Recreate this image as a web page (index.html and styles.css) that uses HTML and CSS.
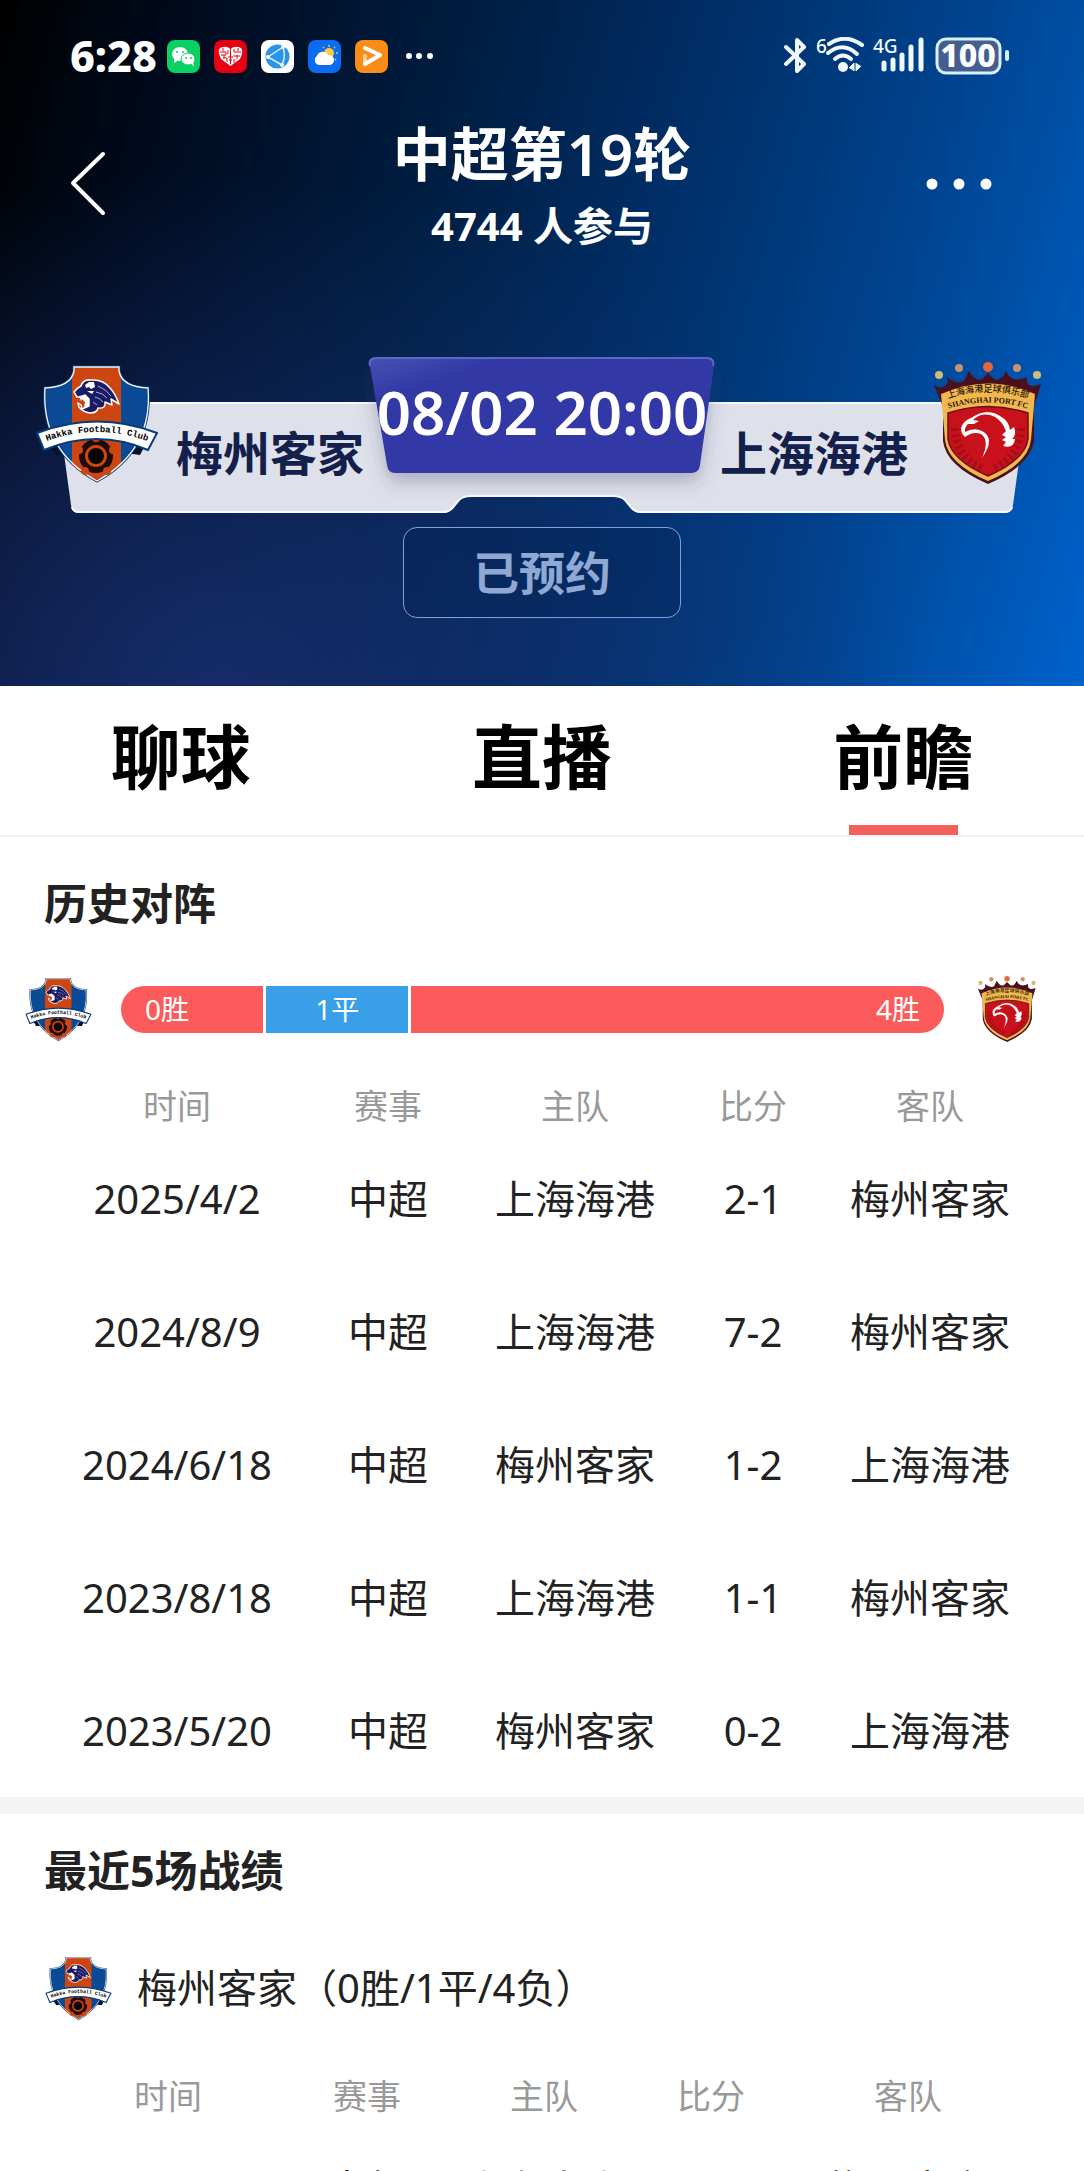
FILE: index.html
```html
<!DOCTYPE html>
<html lang="zh-CN">
<head>
<meta charset="utf-8">
<meta name="viewport" content="width=device-width, initial-scale=1">
<title>中超第19轮</title>
<link rel="stylesheet" href="styles.css">
</head>
<body>
<svg class="sprite" aria-hidden="true">
  <symbol id="crest-meizhou" viewBox="0 0 122 124">
    <path d="M9 76 L20 93 L32 91 L30 78 Z M113 76 L104 93 L90 91 L92 78 Z" fill="#06122c"/>
    <path d="M38 5 H83 V9 Q86 25 112 26 Q117 88 61 119 Q5 88 9 26 Q35 25 38 9 Z" fill="#0b4a94" stroke="#063a7a" stroke-width="3"/>
    <path d="M36 15 L38 5 H83 L85 15 V103 Q76 111 61 118 Q46 111 36 103 Z" fill="#cd4510"/>
    <path d="M38 5 H83 V9 Q86 25 112 26 Q117 88 61 119 Q5 88 9 26 Q35 25 38 9 Z" fill="none" stroke="#e8f2ff" stroke-width="1.4"/>
    <path d="M38 30 Q41 26 45 24 Q47 17 55 18 Q67 17 74 26 Q79 31 83 42 L75 37 L76 43 L69 40 Q70 47 62 46 Q61 51 54 51 Q47 50 43 45 L42 41 L45 43 L46 47 L53 44 L53 37 L49 33 L45 35 L41 35 Z" fill="#1b1b63" stroke="#fff" stroke-width="1.5" stroke-linejoin="round"/>
    <path d="M43 34 L48 33 L53 37 V44 L48 46 L49 40 L46 37 L45 39 Z" fill="#fff"/>
    <path d="M49 23 L53 20 L58 20 L59 25 L55 27 L53 25 L50 26 Z M51 29 L58 29 L56 32 Z" fill="#fff"/>
    <path d="M62 24 Q70 27 75 34 M60 30 Q67 31 71 36 M59 35 Q64 36 67 40 M57 40 L61 43" fill="none" stroke="#a9aed8" stroke-width="1"/>
    <circle cx="60" cy="94" r="17" fill="#1c0b08"/>
    <g fill="#cd4510"><circle cx="60" cy="94" r="11"/><circle cx="60" cy="76" r="4"/><circle cx="77" cy="88" r="4"/><circle cx="71" cy="109" r="4"/><circle cx="49" cy="109" r="4"/><circle cx="43" cy="88" r="4"/></g>
    <circle cx="60" cy="94" r="8" fill="#080505"/>
    <path d="M1 71 Q61 48 121 71 L112 88 Q61 66 8 88 Z" fill="#fff" stroke="#073c79" stroke-width="2"/>
    <path id="ribbon-line" d="M8 80 Q61 60 114 80" fill="none"/>
    <text class="crest-ribbon"><textPath href="#ribbon-line" startOffset="50%">Hakka Football Club</textPath></text>
  </symbol>
  <symbol id="crest-shanghai" viewBox="0 0 122 124">
    <circle cx="13" cy="13" r="4" fill="#cdbd76"/><circle cx="33" cy="6" r="4" fill="#c89272"/><circle cx="62" cy="5" r="5" fill="#e8663a"/><circle cx="91" cy="6" r="4" fill="#c89272"/><circle cx="111" cy="13" r="4" fill="#cdbd76"/>
    <path d="M8 23 Q17 29 22 20 L21 15 Q31 23 38 19 L43 9 Q49 20 56 17 L62 11 L68 17 Q75 20 80 9 Q85 22 101 15 Q99 28 115 22 L108 45 V79 Q104 104 62 122 Q20 104 17 79 V45 Z" fill="#4a101c"/>
    <path d="M15 32 Q62 11 109 32 L105 78 Q102 102 62 119 Q22 102 19 78 Z" fill="#f0b84e"/>
    <path d="M22 51 Q62 38 102 51 V77 Q99 98 62 114 Q25 98 22 77 Z" fill="#c9111c" stroke="#65101b" stroke-width="1.5"/>
    <path d="M29 66 Q29 94 57 107 M95 66 Q95 94 67 107" fill="none" stroke="#a80d18" stroke-width="8" stroke-dasharray="3 3"/>
    <path d="M35 66 Q37 59 45 56 Q62 44 77 56 Q83 60 84 68 L88 65 Q91 73 86 77 L89 77 Q88 87 77 84 L80 80 L76 78 L80 75 L76 73 L80 69 Q76 59 69 55 Q57 49 47 58 L53 59 L48 62 L42 62 Q38 66 39 70 Q48 65 56 69 Q70 76 56 96 Q64 78 55 72 Q47 69 39 75 Q35 72 35 66 Z" fill="#fff"/>
    <path id="port-line" d="M16 39 Q62 20 108 39" fill="none"/>
    <path id="port-line-en" d="M18 48 Q62 33 106 48" fill="none"/>
    <text class="crest-cn"><textPath href="#port-line" startOffset="50%">上海海港足球俱乐部</textPath></text>
    <text class="crest-en"><textPath href="#port-line-en" startOffset="50%">SHANGHAI PORT FC</textPath></text>
  </symbol>
</svg>

<header class="hero">
  <div class="status">
    <div class="status-left">
      <span class="clock">6:28</span>
      <svg class="app" viewBox="0 0 33 33"><rect width="33" height="33" rx="8" fill="#0bd063"/><ellipse cx="13" cy="14" rx="8" ry="7" fill="#fff"/><path d="M7 18 L7 23 L12 20Z" fill="#fff"/><ellipse cx="21" cy="19" rx="7" ry="6" fill="#fff" stroke="#0bd063"/><path d="M24 23 L27 27 L26 21Z" fill="#fff"/><g fill="#0bd063"><circle cx="10" cy="12" r="1"/><circle cx="16" cy="12" r="1"/><circle cx="19" cy="18" r="1"/><circle cx="24" cy="18" r="1"/></g></svg>
      <svg class="app" viewBox="0 0 33 33"><rect width="33" height="33" rx="8" fill="#e60012"/><path d="M16.500 26 L7 19 Q3 11 6 8 Q12 5 16.500 9 Q21 5 27 8 Q30 11 26 19Z" fill="#fff"/><path d="M6 12 H12 V15 H7 M16.500 8 V24 M20 9 V12 H27 M19 16 H26 M9 18 H13 V22 M20 19 V23 M9 8 V11 M24 8 V11 M10 15 V18 M23 15 V19 M14 10 V14 M14 17 H19 M15 20 H18" fill="none" stroke="#e60012" stroke-width="1"/></svg>
      <svg class="app" viewBox="0 0 33 33"><rect width="33" height="33" rx="8" fill="#fff"/><circle cx="16.500" cy="16.500" r="12" fill="#2b93e8"/><path d="M7 17 L22 7 M7 17 L21 25 M22 7 Q25 16 21 25" fill="none" stroke="#d9f0ff" stroke-width="1.500"/><g fill="#fff"><circle cx="7" cy="17" r="2"/><circle cx="22" cy="7" r="2"/><circle cx="21" cy="25" r="2"/></g></svg>
      <svg class="app" viewBox="0 0 33 33"><rect width="33" height="33" rx="8" fill="#0b6cf2"/><circle cx="21" cy="13" r="5" fill="#ffc93b"/><path d="M21 5 V7 M28 13 H30 M15 7 L16 8 M27 7 L26 8 M27 19 L28 20" stroke="#ffc93b" stroke-width="1.500"/><path d="M11 25 A5 5 0 0 1 9 16 A6 6 0 0 1 20 15 A5 5 0 0 1 22 25Z" fill="#fff"/></svg>
      <svg class="app" viewBox="0 0 33 33"><rect width="33" height="33" rx="8" fill="#f98d18"/><path d="M10 16 V23" fill="none" stroke="#ffd19b" stroke-width="4" stroke-linecap="round"/><path d="M10 8 L25 15 L10 24" fill="none" stroke="#fff" stroke-width="4" stroke-linecap="round" stroke-linejoin="round"/></svg>
      <svg class="more-apps" viewBox="0 0 27 8"><g fill="#fff"><circle cx="3" cy="4" r="3"/><circle cx="13" cy="4" r="3"/><circle cx="24" cy="4" r="3"/></g></svg>
    </div>
    <svg class="status-right" viewBox="0 0 226 38" aria-hidden="true">
      <path d="M2 10 L20 27 L13 34 V3 L20 10 L2 27" fill="none" stroke="#f0f8ff" stroke-width="4" stroke-linecap="round" stroke-linejoin="round"/>
      <text class="net" x="32" y="16">6</text>
      <g fill="none" stroke="#f0f8ff" stroke-width="4" stroke-linecap="round"><path d="M45 7 Q61 -4 78 8"/><path d="M44 16 Q59 4 73 17"/><path d="M51 22 Q59 15 67 22"/></g>
      <circle cx="59" cy="30" r="5" fill="#f0f8ff"/><path d="M65 31 L70 26 V34 M72 26 V34 L77 29" fill="#f0f8ff" stroke="#f0f8ff" stroke-width="1"/>
      <text class="net" x="89" y="16">4G</text>
      <path d="M100 26 V32 M109 23 V32 M118 18 V32 M127 10 V32 M137 3 V32" stroke="#f0f8ff" stroke-width="5" stroke-linecap="round"/>
      <rect x="153" y="2" width="63" height="34" rx="9" fill="#435f8e" stroke="#d9f0ff" stroke-width="3"/>
      <text class="charge" x="184" y="30">100</text>
      <path d="M223 15 V22" stroke="#d9f0ff" stroke-width="4" stroke-linecap="round"/>
    </svg>
  </div>

  <div class="topbar">
    <button class="icon-btn" type="button" aria-label="返回"><svg width="37" height="66" viewBox="0 0 37 66"><path d="M34 3 L4 32 L34 62" fill="none" stroke="#fff" stroke-width="4" stroke-linecap="round" stroke-linejoin="round"/></svg></button>
    <div class="headline">
      <h1 class="title">中超第19轮</h1>
      <p class="joined">4744 人参与</p>
    </div>
    <button class="icon-btn icon-btn-more" type="button" aria-label="更多"><svg width="66" height="12" viewBox="0 0 66 12"><g fill="#fff"><circle cx="6" cy="6" r="5.500"/><circle cx="33" cy="6" r="5.500"/><circle cx="60" cy="6" r="5.500"/></g></svg></button>
  </div>

  <div class="match">
    <svg class="banner" viewBox="0 0 1084 180" preserveAspectRatio="none" aria-hidden="true">
      <defs>
        <linearGradient id="kick" x1="0" y1="0" x2="1" y2="1"><stop offset="0" stop-color="#4653b4"/><stop offset=".2" stop-color="#3139a4"/><stop offset="1" stop-color="#3038a6"/></linearGradient>
        <filter id="drop" x="-10%" y="-10%" width="120%" height="140%"><feDropShadow dx="0" dy="9" stdDeviation="9" flood-color="#3a3566" flood-opacity=".3"/></filter>
      </defs>
      <path d="M57 46 H1027 L1013 148 Q1012 156 1004 156 H641 Q634 156 630 150 L625 143 Q621 139 613 139 H471 Q463 139 459 143 L454 150 Q450 156 443 156 H79 Q72 156 71 148 Z" fill="#dfe1ea"/>
      <path d="M57 46 H1027 M1012 150 Q1011 155 1004 155 H641 Q634 155 630 149 L625 143 Q621 139 613 139 H471 Q463 139 459 143 L454 149 Q450 155 443 155 H79 Q73 155 72 150" fill="none" stroke="#f6fbff" stroke-width="2"/>
      <path d="M377 0 H706 Q715 0 714 9 L700 108 Q699 116 691 116 H395 Q388 116 387 108 L370 9 Q368 0 377 0 Z" fill="url(#kick)" filter="url(#drop)"/>
      <path d="M370 9 Q368 1 377 1 H706 Q715 1 713 9" fill="none" stroke="#5a68c4" stroke-width="2"/>
    </svg>
    <div class="team"><svg class="crest" role="img" aria-label="梅州客家"><use href="#crest-meizhou"/></svg><span class="team-name">梅州客家</span></div>
    <time class="kickoff">08/02 20:00</time>
    <div class="team team-away"><span class="team-name">上海海港</span><svg class="crest" role="img" aria-label="上海海港"><use href="#crest-shanghai"/></svg></div>
  </div>
  <button class="booked" type="button">已预约</button>
</header>

<nav class="tabs">
  <a class="tab" href="#chat">聊球</a>
  <a class="tab" href="#live">直播</a>
  <a class="tab tab-active" href="#preview" aria-current="page">前瞻</a>
</nav>

<main class="content" id="preview">
  <section class="history">
    <h2 class="section-title">历史对阵</h2>
    <div class="versus">
      <svg class="crest-small" role="img" aria-label="梅州客家"><use href="#crest-meizhou"/></svg>
      <div class="bar">
        <span class="seg seg-home">0胜</span><span class="seg seg-draw">1平</span><span class="seg seg-away">4胜</span>
      </div>
      <svg class="crest-small" role="img" aria-label="上海海港"><use href="#crest-shanghai"/></svg>
    </div>
    <table class="results results-history">
      <colgroup><col class="h-date"><col class="h-cup"><col class="h-home"><col class="h-score"><col class="h-away"></colgroup>
      <thead><tr><th>时间</th><th>赛事</th><th>主队</th><th>比分</th><th>客队</th></tr></thead>
      <tbody>
        <tr><td>2025/4/2</td><td>中超</td><td>上海海港</td><td>2-1</td><td>梅州客家</td></tr>
        <tr><td>2024/8/9</td><td>中超</td><td>上海海港</td><td>7-2</td><td>梅州客家</td></tr>
        <tr><td>2024/6/18</td><td>中超</td><td>梅州客家</td><td>1-2</td><td>上海海港</td></tr>
        <tr><td>2023/8/18</td><td>中超</td><td>上海海港</td><td>1-1</td><td>梅州客家</td></tr>
        <tr><td>2023/5/20</td><td>中超</td><td>梅州客家</td><td>0-2</td><td>上海海港</td></tr>
      </tbody>
    </table>
  </section>
  <section class="recent">
    <h2 class="section-title section-title-recent">最近5场战绩</h2>
    <div class="form-team">
      <svg class="crest-small" role="img" aria-label="梅州客家"><use href="#crest-meizhou"/></svg>
      <h3 class="form-name">梅州客家（0胜/1平/4负）</h3>
    </div>
    <table class="results results-recent">
      <colgroup><col class="r-date"><col class="r-cup"><col class="r-home"><col class="r-score"><col class="r-away"></colgroup>
      <thead><tr><th>时间</th><th>赛事</th><th>主队</th><th>比分</th><th>客队</th></tr></thead>
      <tbody>
        <tr><td>2025/7/27</td><td>中超</td><td>山东泰山</td><td>2-1</td><td>梅州客家</td></tr>
      </tbody>
    </table>
  </section>
</main>
</body>
</html>
```
FILE: styles.css
```css
* { box-sizing: border-box; }

body {
  margin: 0;
  height: 100vh;
  display: flex;
  flex-direction: column;
  background: #fff;
  color: #222;
  font-family: "Noto Sans", "Noto Sans CJK SC", sans-serif;
}

h1, h2, h3, p { margin: 0; }
button { font-family: inherit; padding: 0; cursor: pointer; }

.sprite { position: absolute; width: 0; height: 0; }
.crest-ribbon { font: 700 9px "Liberation Mono", monospace; text-anchor: middle; fill: #000; }
.crest-cn { font: 500 9px "Noto Sans CJK SC", sans-serif; text-anchor: middle; fill: #2a1408; }
.crest-en { font: 700 8px "Liberation Serif", serif; text-anchor: middle; fill: #2a1408; }

/* Header */
.hero {
  flex: none;
  padding-bottom: 68px;
  color: #fff;
  background:
    radial-gradient(ellipse 65% 75% at 20% 100%, rgba(24, 46, 110, 0.9), rgba(24, 46, 110, 0) 100%),
    linear-gradient(106deg, #000 0%, #000a1c 14%, #001c3e 36%, #002c62 54%, #004490 77%, #0062cc 100%);
}

.status {
  height: 112px;
  padding: 0 74px 0 70px;
  display: flex;
  align-items: center;
  justify-content: space-between;
}
.status-left { display: flex; align-items: center; gap: 14px; }
.clock { width: 83px; font-size: 43px; font-weight: 800; line-height: 48px; white-space: nowrap; }
.app { width: 33px; height: 33px; }
.more-apps { width: 27px; height: 8px; margin-left: 4px; }
.status-right { width: 226px; height: 38px; }
.net { font: 500 19px "Noto Sans", sans-serif; fill: #f0f8ff; }
.charge { font: 800 32px "Noto Sans", sans-serif; fill: #fff; text-anchor: middle; }

.topbar {
  padding: 0 92px 0 69px;
  display: grid;
  grid-template-columns: 100px 1fr 77px;
  align-items: center;
}
.icon-btn { display: flex; border: 0; background: none; }
.icon-btn-more { justify-content: flex-end; }
.headline { text-align: center; }
.title { font-size: 58px; font-weight: 600; line-height: 84px; }
.joined { font-size: 40px; font-weight: 700; line-height: 60px; }

.match {
  position: relative;
  margin-top: 101px;
  height: 156px;
  padding: 0 36px;
  display: flex;
}
.banner { position: absolute; left: 0; top: 0; width: 100%; height: 180px; }
.team {
  position: relative;
  flex: 1;
  display: flex;
  align-items: flex-end;
  gap: 18px;
  padding-bottom: 27px;
}
.team-away { justify-content: flex-end; }
.crest { width: 122px; height: 124px; }
.team-name { font-size: 47px; font-weight: 600; line-height: 66px; color: #14204c; white-space: nowrap; }
.kickoff {
  position: relative;
  width: 346px;
  font-size: 60px;
  font-weight: 600;
  line-height: 110px;
  text-align: center;
  white-space: nowrap;
}

.booked {
  display: block;
  width: 278px;
  height: 91px;
  margin: 14px auto 0;
  padding-bottom: 6px;
  border: 1px solid #7fa3d8;
  border-radius: 14px;
  background: rgba(0, 32, 80, 0.3);
  color: #8fa9d3;
  font-size: 46px;
  font-weight: 600;
}

/* Tabs */
.tabs { flex: none; display: flex; border-bottom: 2px solid #f0f1f2; }
.tab {
  position: relative;
  flex: 1;
  padding: 21px 0 28px;
  color: #000;
  font-size: 70px;
  font-weight: 700;
  line-height: 100px;
  text-align: center;
  text-decoration: none;
}
.tab-active::after {
  content: "";
  position: absolute;
  left: 35%;
  right: 35%;
  bottom: 0;
  height: 10px;
  background: #f55f5b;
}

/* Content */
.content { flex: 1; min-height: 0; overflow-y: auto; scrollbar-width: none; }
.history { border-bottom: 17px solid #f3f4f4; }
.section-title { padding-left: 44px; font-size: 43px; font-weight: 700; line-height: 134px; }
.section-title-recent { line-height: 114px; }

.versus {
  height: 76px;
  margin-bottom: 33px;
  padding: 0 43px 0 24px;
  display: flex;
  align-items: center;
  gap: 28px;
}
.crest-small { flex: none; width: 69px; height: 67px; }
.bar { flex: 1; display: flex; gap: 3px; border-radius: 24px; overflow: hidden; }
.seg { padding: 0 24px; color: #fff; font-size: 28px; line-height: 47px; background: #fb5b5b; }
.seg-home { flex: 142 1 142px; }
.seg-draw { flex: 142 1 142px; text-align: center; background: #389fe8; }
.seg-away { flex: 532 1 532px; text-align: right; }

.results { table-layout: fixed; border-collapse: collapse; text-align: center; }
.results th { height: 52px; padding: 0; color: #999; font-size: 34px; font-weight: 400; line-height: 50px; }
.results td { height: 133px; padding: 0; font-size: 40px; line-height: 60px; white-space: nowrap; }
.results-history { width: calc(100% - 138px); margin: 0 70px 0 68px; }
.h-date { width: 218px; }
.h-cup { width: 204px; }
.h-home { width: 170px; }
.h-score { width: 186px; }
.h-away { width: 168px; }

.form-team { height: 120px; padding-left: 44px; display: flex; align-items: center; gap: 24px; }
.form-name { font-size: 40px; font-weight: 400; line-height: 60px; }
.results-recent { width: calc(100% - 108px); margin: 22px 54px 0; }
.r-date { width: 228px; }
.r-cup { width: 170px; }
.r-home { width: 184px; }
.r-score { width: 150px; }
.r-away { width: 244px; }
```
